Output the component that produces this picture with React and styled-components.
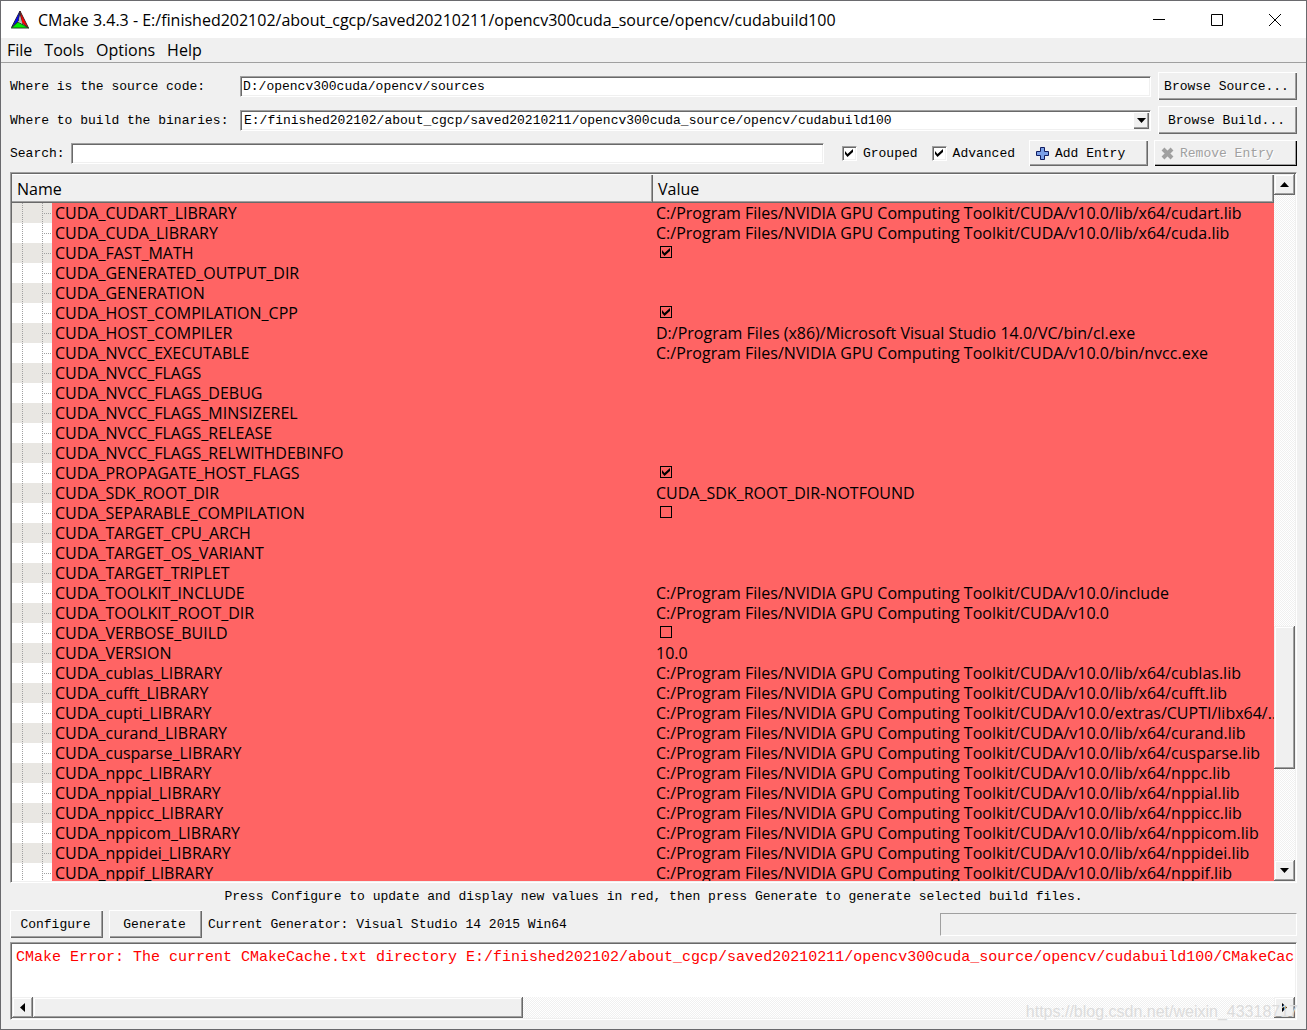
import React, { useState } from "react"
import styled, { createGlobalStyle, css } from "styled-components"

const GlobalStyle = createGlobalStyle`
  * {
    box-sizing: border-box;
  }
  body {
    margin: 0;
    background: #f0f0f0;
  }
  button, input, select {
    margin: 0;
    font: inherit;
    color: inherit;
  }
`

const uiFont = css`
  font-family: "Open Sans", "Noto Sans", sans-serif;
  font-size: 16px;
`

const sunken = css`
  border: 1px solid;
  border-color: #a0a0a0 #fff #fff #a0a0a0;
  border-radius: 0;
  box-shadow: inset 1px 1px #696969, inset -1px -1px #f0f0f0;
  outline: none;
`

const raised = css`
  border: none;
  background: #f0f0f0;
  box-shadow: inset 1px 1px #fff, inset -1px -1px #696969,
    inset -2px -2px #a0a0a0;
`

const Window = styled.div`
  display: flex;
  flex-direction: column;
  height: 100vh;
  border: 1px solid #6a6a6e;
  background: #f0f0f0;
  color: #000;
  font-family: "Liberation Mono", monospace;
  font-size: 13px;
  overflow: hidden;
`

const TitleBar = styled.header`
  ${uiFont}
  display: flex;
  align-items: center;
  height: 37px;
  padding: 0 2px 0 9px;
  background: #fff;
  flex: none;

  h1 {
    flex: 1;
    margin: 0 0 0 8px;
    font-size: 16px;
    font-weight: 400;
    white-space: nowrap;
    overflow: hidden;
  }
`

const CaptionButton = styled.button`
  display: flex;
  align-items: center;
  justify-content: center;
  width: 58px;
  height: 37px;
  padding: 0;
  border: none;
  background: none;
`

const MenuBar = styled.nav`
  ${uiFont}
  display: flex;
  align-items: center;
  flex: none;
  height: 25px;
  border-bottom: 1px solid #a0a0a0;

  button {
    padding: 0 6px;
    border: none;
    background: none;
    line-height: 24px;
  }
`

const Content = styled.main`
  display: flex;
  flex-direction: column;
  gap: 6px;
  flex: 1;
  min-height: 0;
  padding: 9px;
`

const Paths = styled.div`
  display: grid;
  grid-template-columns: 223px 1fr 139px;
  gap: 6px 7px;
  align-items: center;
`

const PushButton = styled.button`
  ${raised}
  display: flex;
  align-items: center;
  justify-content: center;
  flex: none;
  width: ${(p) => p.$width || "100%"};
  height: 28px;
  padding: 0 4px 0 2px;
  white-space: nowrap;
`

const EntryButton = styled(PushButton)`
  justify-content: flex-start;
  gap: 6px;
  height: 26px;
  padding: 0 7px;

  &:disabled {
    color: #a0a0a0;
    text-shadow: 1px 1px #fff;
    box-shadow: inset 1px 1px #fff, inset -1px -1px #000,
      inset -2px -2px #a0a0a0;
  }
`

const TextField = styled.input`
  ${sunken}
  flex: 1;
  width: 100%;
  min-width: 0;
  height: 21px;
  padding: 0 2px;
  background: #fff;
`

const Combo = styled.div`
  position: relative;
  display: flex;

  select {
    ${sunken}
    appearance: none;
    width: 100%;
    height: 21px;
    padding: 0 3px;
    background: #fff;
  }
`

const ComboArrow = styled.span`
  ${raised}
  position: absolute;
  top: 2px;
  right: 2px;
  display: flex;
  align-items: center;
  justify-content: center;
  width: 16px;
  height: 17px;
  pointer-events: none;
`

const SearchRow = styled.div`
  display: flex;
  align-items: center;
  gap: 6px;
`

const Options = styled.div`
  display: flex;
  gap: 14px;
  margin: 0 8px 0 12px;
`

const CheckLabel = styled.label`
  display: flex;
  align-items: center;
  gap: 6px;
`

const CheckBox = styled.span`
  display: inline-grid;
  place-items: center;

  input,
  svg {
    grid-area: 1 / 1;
  }

  input {
    appearance: none;
    ${(p) =>
      p.$flat
        ? css`
            width: 12px;
            height: 12px;
            border: 1px solid #000;
          `
        : css`
            ${sunken}
            width: 15px;
            height: 15px;
            background: #fff;
          `}
  }

  svg {
    pointer-events: none;
  }

  input:not(:checked) + svg {
    display: none;
  }
`

const Frame = styled.section`
  ${sunken}
  padding: 1px;
`

const TreeFrame = styled(Frame)`
  display: flex;
  flex: 1;
  min-height: 0;
`

const TreeView = styled.div`
  flex: 1;
  min-width: 0;
  overflow: hidden;
`

const Tree = styled.table`
  ${uiFont}
  width: 100%;
  table-layout: fixed;
  border-collapse: separate;
  border-spacing: 0;

  th {
    height: 29px;
    padding: 0 5px;
    background: #f0f0f0;
    box-shadow: inset 0 1px #fff, inset -1px -1px #696969,
      inset -2px -2px #a0a0a0;
    font-weight: 400;
    line-height: 20px;
    text-align: left;
  }

  th:first-child {
    width: 641px;
  }

  td {
    height: 20px;
    padding: 0 0 0 3px;
    background: #ff6464;
    line-height: 20px;
    white-space: nowrap;
  }

  td:first-child {
    padding: 0;
  }
`

const NameCell = styled.div`
  display: flex;
  gap: 3px;
`

const Branch = styled.span`
  width: 40px;
  height: 20px;
  background-color: ${(p) => (p.$shaded ? "#e9e7e3" : "#fff")};
  background-image: repeating-linear-gradient(
      to bottom,
      #a0a0a0 0 1px,
      transparent 1px 2px
    ),
    repeating-linear-gradient(to bottom, #a0a0a0 0 1px, transparent 1px 2px),
    repeating-linear-gradient(to right, #a0a0a0 0 1px, transparent 1px 2px);
  background-size: 1px 20px, 1px 20px, 10px 1px;
  background-position: 10px 0, 30px 0, 30px 10px;
  background-repeat: no-repeat;
`

const CheckCell = styled.div`
  display: flex;
  align-items: flex-start;
  height: 20px;
  padding: 3px 4px 0;
`

const ScrollBar = styled.div`
  display: flex;
  flex-direction: ${(p) => (p.$vertical ? "column" : "row")};
  flex: none;
  ${(p) => (p.$vertical ? "width: 21px;" : "height: 21px;")}
  background: repeating-conic-gradient(#fff 0 25%, #f0f0f0 0 50%) 0 0 / 2px 2px;
`

const scrollBevel = css`
  background: #f0f0f0;
  box-shadow: inset -1px -1px #696969, inset 1px 1px #f0f0f0,
    inset -2px -2px #a0a0a0, inset 2px 2px #fff;
`

const ScrollButton = styled.button`
  ${scrollBevel}
  display: flex;
  align-items: center;
  justify-content: center;
  flex: none;
  width: 21px;
  height: 21px;
  padding: 0;
  border: none;
`

const Track = styled.div`
  flex: ${(p) => p.$size} 1 0;
`

const Thumb = styled(Track)`
  ${scrollBevel}
`

const Hint = styled.p`
  margin: 0;
  line-height: 15px;
  text-align: center;
`

const Footer = styled.footer`
  display: flex;
  flex-direction: column;
  gap: 4px;
`

const Actions = styled.div`
  display: flex;
  align-items: center;
  gap: 6px;

  progress {
    appearance: none;
    flex: 0 1 357px;
    min-width: 0;
    height: 23px;
    margin-left: auto;
    border: 1px solid;
    border-color: #a0a0a0 #fff #fff #a0a0a0;
    background: #f0f0f0;
  }

  progress::-webkit-progress-bar {
    background: #f0f0f0;
  }
`

const Output = styled(Frame)`
  display: flex;
  flex-direction: column;
  height: 78px;
  background: #fff;

  pre {
    flex: 1;
    margin: 0;
    padding: 5px 0 5px 4px;
    color: #f00;
    font-family: "Liberation Mono", monospace;
    font-size: 15px;
    line-height: 18px;
    overflow: hidden;
  }
`

const Watermark = styled.div`
  position: absolute;
  right: 9px;
  bottom: 8px;
  color: #dcdcdc;
  font-family: "Liberation Sans", sans-serif;
  font-size: 16px;
  line-height: 20px;
  pointer-events: none;
`

const sdk = "C:/Program Files/NVIDIA GPU Computing Toolkit/CUDA/v10.0"

const entries = [
  ["CUDA_CUDART_LIBRARY", `${sdk}/lib/x64/cudart.lib`],
  ["CUDA_CUDA_LIBRARY", `${sdk}/lib/x64/cuda.lib`],
  ["CUDA_FAST_MATH", true],
  ["CUDA_GENERATED_OUTPUT_DIR", ""],
  ["CUDA_GENERATION", ""],
  ["CUDA_HOST_COMPILATION_CPP", true],
  [
    "CUDA_HOST_COMPILER",
    "D:/Program Files (x86)/Microsoft Visual Studio 14.0/VC/bin/cl.exe",
  ],
  ["CUDA_NVCC_EXECUTABLE", `${sdk}/bin/nvcc.exe`],
  ["CUDA_NVCC_FLAGS", ""],
  ["CUDA_NVCC_FLAGS_DEBUG", ""],
  ["CUDA_NVCC_FLAGS_MINSIZEREL", ""],
  ["CUDA_NVCC_FLAGS_RELEASE", ""],
  ["CUDA_NVCC_FLAGS_RELWITHDEBINFO", ""],
  ["CUDA_PROPAGATE_HOST_FLAGS", true],
  ["CUDA_SDK_ROOT_DIR", "CUDA_SDK_ROOT_DIR-NOTFOUND"],
  ["CUDA_SEPARABLE_COMPILATION", false],
  ["CUDA_TARGET_CPU_ARCH", ""],
  ["CUDA_TARGET_OS_VARIANT", ""],
  ["CUDA_TARGET_TRIPLET", ""],
  ["CUDA_TOOLKIT_INCLUDE", `${sdk}/include`],
  ["CUDA_TOOLKIT_ROOT_DIR", sdk],
  ["CUDA_VERBOSE_BUILD", false],
  ["CUDA_VERSION", "10.0"],
  ["CUDA_cublas_LIBRARY", `${sdk}/lib/x64/cublas.lib`],
  ["CUDA_cufft_LIBRARY", `${sdk}/lib/x64/cufft.lib`],
  ["CUDA_cupti_LIBRARY", `${sdk}/extras/CUPTI/libx64/...`],
  ["CUDA_curand_LIBRARY", `${sdk}/lib/x64/curand.lib`],
  ["CUDA_cusparse_LIBRARY", `${sdk}/lib/x64/cusparse.lib`],
  ["CUDA_nppc_LIBRARY", `${sdk}/lib/x64/nppc.lib`],
  ["CUDA_nppial_LIBRARY", `${sdk}/lib/x64/nppial.lib`],
  ["CUDA_nppicc_LIBRARY", `${sdk}/lib/x64/nppicc.lib`],
  ["CUDA_nppicom_LIBRARY", `${sdk}/lib/x64/nppicom.lib`],
  ["CUDA_nppidei_LIBRARY", `${sdk}/lib/x64/nppidei.lib`],
  ["CUDA_nppif_LIBRARY", `${sdk}/lib/x64/nppif.lib`],
]

const buildDir =
  "E:/finished202102/about_cgcp/saved20210211/opencv300cuda_source/opencv/cudabuild100"

const arrows = {
  up: "M0 5h9L4.500 0z",
  down: "M0 0h9L4.500 5z",
  left: "M5 0v9L0 4.500z",
  right: "M0 0v9L5 4.500z",
}

const Arrow = ({ to }) => {
  const upright = to === "up" || to === "down"
  return (
    <svg width={upright ? 9 : 5} height={upright ? 5 : 9} aria-hidden="true">
      <path d={arrows[to]} />
    </svg>
  )
}

const Check = ({ label, flat, defaultChecked, id }) => {
  const [checked, setChecked] = useState(defaultChecked)
  return (
    <CheckBox $flat={flat}>
      <input
        type="checkbox"
        id={id}
        aria-label={label}
        checked={checked}
        onChange={(e) => setChecked(e.target.checked)}
      />
      <svg width="8" height="8" viewBox="0 0 8 8" aria-hidden="true">
        <path d="M0 2v3l2.500 3L8 3V0L2.500 5z" />
      </svg>
    </CheckBox>
  )
}

const Logo = () => (
  <svg width="20" height="20" viewBox="0 0 20 20" aria-hidden="true">
    <path d="M10 1L1.500 17.500 8.500 11z" fill="#00f" stroke="#224" />
    <path d="M10 1l8.500 17-7-5.500z" fill="#f00" stroke="#422" />
    <path d="M1.500 18L8 12l10.500 6z" fill="#0e0" stroke="#242" />
    <path d="M10 6l-1.500 6 4 1.500z" fill="#b8b8b8" />
  </svg>
)

const App = () => {
  return (
    <Window>
      <GlobalStyle />
      <TitleBar>
        <Logo />
        <h1>CMake 3.4.3 - {buildDir}</h1>
        <CaptionButton aria-label="Minimize">
          <svg width="12" height="12">
            <path d="M0 5.500h12" stroke="#000" />
          </svg>
        </CaptionButton>
        <CaptionButton aria-label="Maximize">
          <svg width="12" height="12">
            <path d="M.5.5h11v11H.5z" stroke="#000" fill="none" />
          </svg>
        </CaptionButton>
        <CaptionButton aria-label="Close">
          <svg width="12" height="12">
            <path d="M0 0l12 12M12 0L0 12" stroke="#000" />
          </svg>
        </CaptionButton>
      </TitleBar>

      <MenuBar>
        <button>File</button>
        <button>Tools</button>
        <button>Options</button>
        <button>Help</button>
      </MenuBar>

      <Content>
        <Paths>
          <label htmlFor="source">Where is the source code:</label>
          <TextField id="source" defaultValue="D:/opencv300cuda/opencv/sources" />
          <PushButton>Browse Source...</PushButton>

          <label htmlFor="build">Where to build the binaries:</label>
          <Combo>
            <select id="build">
              <option>{buildDir}</option>
            </select>
            <ComboArrow>
              <Arrow to="down" />
            </ComboArrow>
          </Combo>
          <PushButton>Browse Build...</PushButton>
        </Paths>

        <SearchRow>
          <label htmlFor="search">Search:</label>
          <TextField id="search" />
          <Options>
            <CheckLabel htmlFor="grouped">
              <Check id="grouped" defaultChecked />
              Grouped
            </CheckLabel>
            <CheckLabel htmlFor="advanced">
              <Check id="advanced" defaultChecked />
              Advanced
            </CheckLabel>
          </Options>
          <EntryButton $width="119px">
            <svg width="13" height="13" viewBox="0 0 13 13" aria-hidden="true">
              <path
                d="M4.500.5h4v4h4v4h-4v4h-4v-4h-4v-4h4z"
                fill="#7ba0e8"
                stroke="#101c60"
              />
            </svg>
            Add Entry
          </EntryButton>
          <EntryButton $width="143px" disabled>
            <svg width="13" height="13" viewBox="0 0 13 13" aria-hidden="true">
              <path d="M2 2l9 9M11 2l-9 9" stroke="#a0a0a0" strokeWidth="4" />
            </svg>
            Remove Entry
          </EntryButton>
        </SearchRow>

        <TreeFrame>
          <TreeView>
            <Tree>
              <thead>
                <tr>
                  <th>Name</th>
                  <th>Value</th>
                </tr>
              </thead>
              <tbody>
                {entries.map(([name, value], i) => (
                  <tr key={name}>
                    <td>
                      <NameCell>
                        <Branch $shaded={i % 2 === 0} />
                        {name}
                      </NameCell>
                    </td>
                    <td>
                      {typeof value === "boolean" ? (
                        <CheckCell>
                          <Check flat label={name} defaultChecked={value} />
                        </CheckCell>
                      ) : (
                        value
                      )}
                    </td>
                  </tr>
                ))}
              </tbody>
            </Tree>
          </TreeView>
          <ScrollBar $vertical>
            <ScrollButton aria-label="Scroll up">
              <Arrow to="up" />
            </ScrollButton>
            <Track $size={431} />
            <Thumb $size={143} />
            <Track $size={91} />
            <ScrollButton aria-label="Scroll down">
              <Arrow to="down" />
            </ScrollButton>
          </ScrollBar>
        </TreeFrame>

        <Hint>
          Press Configure to update and display new values in red, then press
          Generate to generate selected build files.
        </Hint>

        <Footer>
          <Actions>
            <PushButton $width="93px">Configure</PushButton>
            <PushButton $width="93px">Generate</PushButton>
            <span>Current Generator: Visual Studio 14 2015 Win64</span>
            <progress value="0" max="100" aria-label="Progress" />
          </Actions>

          <Output>
            <pre>
              CMake Error: The current CMakeCache.txt directory {buildDir}
              /CMakeCache.txt
            </pre>
            <ScrollBar>
              <ScrollButton aria-label="Scroll left">
                <Arrow to="left" />
              </ScrollButton>
              <Thumb $size={490} />
              <Track $size={751} />
              <ScrollButton aria-label="Scroll right">
                <Arrow to="right" />
              </ScrollButton>
            </ScrollBar>
          </Output>
        </Footer>
      </Content>
      <Watermark>https://blog.csdn.net/weixin_43318717</Watermark>
    </Window>
  )
}

export default App
